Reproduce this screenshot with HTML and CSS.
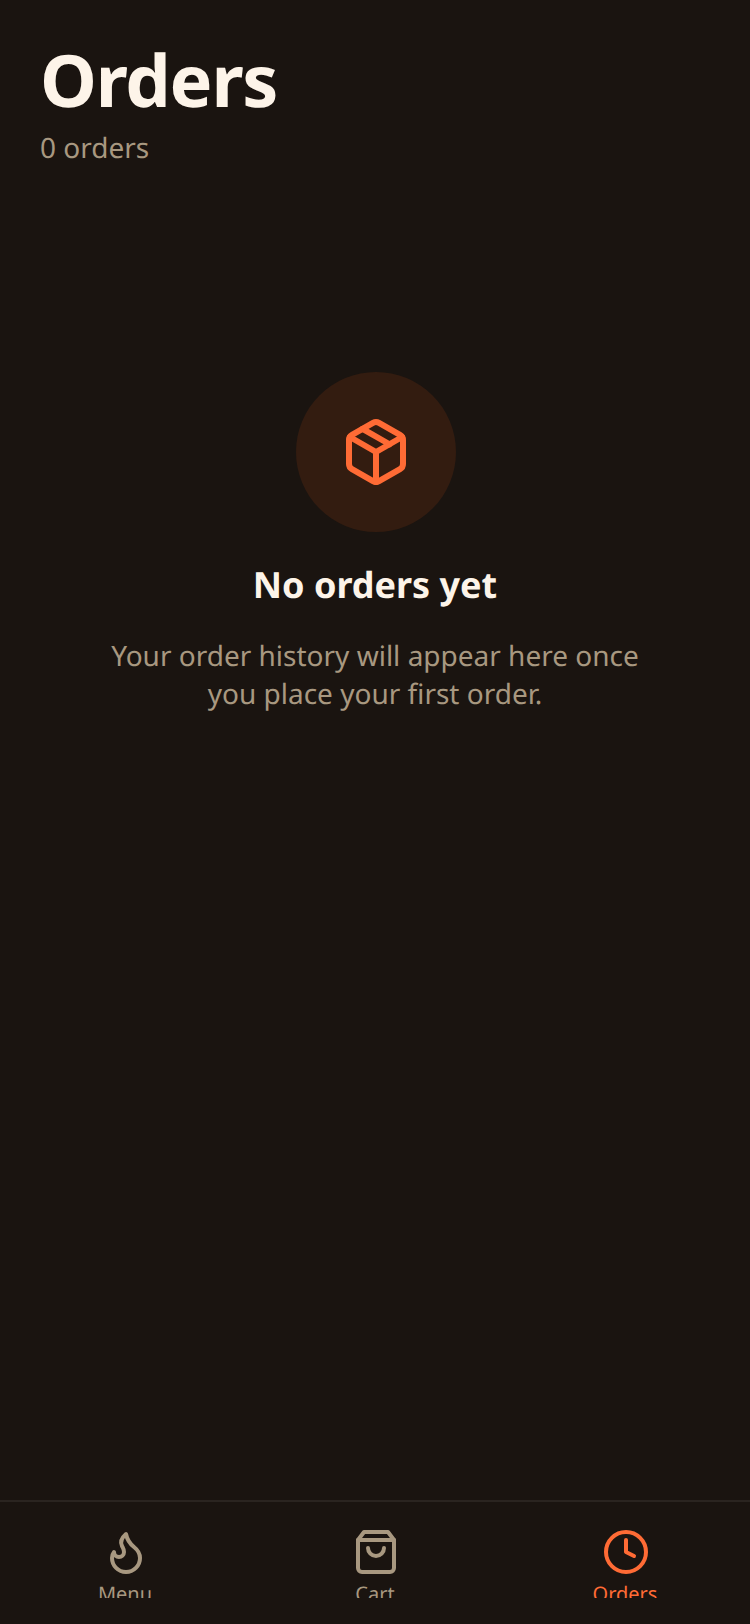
FILE: index.html
```html
<!DOCTYPE html>
<html lang="en">
<head>
  <meta charset="UTF-8">
  <meta name="viewport" content="width=device-width, initial-scale=1.0">
  <title>Orders</title>
  <link rel="stylesheet" href="styles.css">
</head>
<body>
  <div class="screen">
    <header class="header">
      <h1>Orders</h1>
      <p>0 orders</p>
    </header>

    <main class="empty">
      <div class="empty-icon">
        <svg class="icon-box" viewBox="0 0 24 24" fill="none" stroke="currentColor" stroke-width="2" stroke-linecap="round" stroke-linejoin="round">
          <path d="m7.5 4.27 9 5.15"/>
          <path d="M21 8a2 2 0 0 0-1-1.73l-7-4a2 2 0 0 0-2 0l-7 4A2 2 0 0 0 3 8v8a2 2 0 0 0 1 1.73l7 4a2 2 0 0 0 2 0l7-4A2 2 0 0 0 21 16Z"/>
          <path d="m3.3 7 8.7 5 8.7-5"/>
          <path d="M12 22V12"/>
        </svg>
      </div>
      <h2>No orders yet</h2>
      <p>Your order history will appear here once you place your first order.</p>
    </main>

    <nav class="tabs">
      <div class="tab">
        <svg class="tab-icon" viewBox="0 0 24 24" fill="none" stroke="currentColor" stroke-width="2" stroke-linecap="round" stroke-linejoin="round">
          <path d="M8.5 14.5A2.5 2.5 0 0 0 11 12c0-1.38-.5-2-1-3-1.072-2.143-.224-4.054 2-6 .5 2.5 2 4.9 4 6.5 2 1.6 3 3.5 3 5.5a7 7 0 1 1-14 0c0-1.153.433-2.294 1-3a2.5 2.5 0 0 0 2.5 2.5z"/>
        </svg>
        <span>Menu</span>
      </div>
      <div class="tab">
        <svg class="tab-icon" viewBox="0 0 24 24" fill="none" stroke="currentColor" stroke-width="2" stroke-linecap="round" stroke-linejoin="round">
          <path d="M6 2 3 6v14a2 2 0 0 0 2 2h14a2 2 0 0 0 2-2V6l-3-4Z"/>
          <path d="M3 6h18"/>
          <path d="M16 10a4 4 0 0 1-8 0"/>
        </svg>
        <span>Cart</span>
      </div>
      <div class="tab active">
        <svg class="tab-icon" viewBox="0 0 24 24" fill="none" stroke="currentColor" stroke-width="2" stroke-linecap="round" stroke-linejoin="round">
          <circle cx="12" cy="12" r="10"/>
          <polyline points="12 6 12 12 16 14"/>
        </svg>
        <span>Orders</span>
      </div>
    </nav>
  </div>
</body>
</html>
```

FILE: styles.css
```css
body {
  margin: 0;
  padding: 0;
  background-color: #1a1410;
  font-family: "Noto Sans", sans-serif;
  text-rendering: geometricPrecision;
}
.screen {
  display: flex;
  flex-direction: column;
  height: 1624px;
}
.header {
  padding: 32px 40px 0;
}
.header h1 {
  margin: 0;
  font-size: 72px;
  line-height: 96px;
  font-weight: 700;
  letter-spacing: -1.2px;
  color: #fdf4e9;
}
.header p {
  margin: 0;
  font-size: 28px;
  line-height: 40px;
  color: #a89880;
}
.empty {
  flex: 1;
  display: flex;
  flex-direction: column;
  align-items: center;
  padding-top: 204px;
}
.empty-icon {
  width: 160px;
  height: 160px;
  margin-left: 2px;
  border-radius: 50%;
  background-color: #331c10;
  color: #ff6b35;
  display: flex;
  align-items: center;
  justify-content: center;
}
.icon-box {
  width: 72px;
  height: 72px;
}
.empty h2 {
  margin: 29px 0 0;
  font-size: 36px;
  line-height: 48px;
  font-weight: 700;
  color: #fdf4e9;
}
.empty p {
  margin: 28px 0 0;
  width: 560px;
  font-size: 28px;
  line-height: 38px;
  text-align: center;
  color: #a89880;
}
.tabs {
  display: flex;
  height: 122px;
  border-top: 2px solid #2a2420;
}
.tab {
  flex: 1;
  height: 96px;
  overflow: hidden;
  display: flex;
  flex-direction: column;
  align-items: center;
  padding-top: 26px;
  box-sizing: border-box;
  color: #a89880;
  font-size: 20px;
  line-height: 28px;
}
.tab.active {
  color: #ff6b35;
}
.tab-icon {
  width: 48px;
  height: 48px;
  margin-left: 2px;
  margin-bottom: 4px;
  flex-shrink: 0;
}
```
